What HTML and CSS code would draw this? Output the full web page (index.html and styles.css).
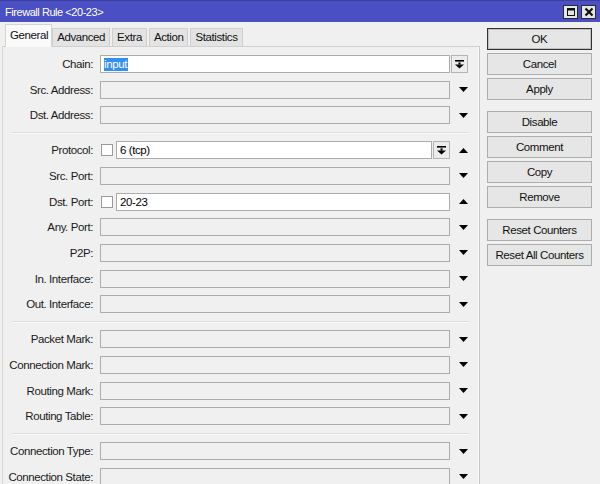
FILE: index.html
```html
<!DOCTYPE html>
<html>
<head>
<meta charset="utf-8">
<link rel="stylesheet" href="styles.css">
</head>
<body>
<div class="window">
  <div class="titlebar">
    <span class="title">Firewall Rule &lt;20-23&gt;</span>
    <div class="tb-btns">
      <span class="tb-btn"><svg width="10" height="10" viewBox="0 0 10 10"><path d="M1 1H9V9H1Z M2 3.5V8H8V3.5Z" fill="#111" fill-rule="evenodd"/></svg></span>
      <span class="tb-btn"><svg width="10" height="10" viewBox="0 0 10 10"><path d="M1.5 1.5L8.5 8.5M8.5 1.5L1.5 8.5" stroke="#111" stroke-width="2.2"/></svg></span>
    </div>
  </div>
  <div class="main">
    <div class="left">
      <div class="tabs">
        <span class="tab active">General</span>
        <span class="tab first">Advanced</span>
        <span class="tab">Extra</span>
        <span class="tab">Action</span>
        <span class="tab">Statistics</span>
      </div>
      <div class="panel">
        <div class="group">
          <label class="lbl">Chain:</label>
          <div class="ctl"><div class="field white"><span class="sel">input</span></div></div>
          <div class="arr start"><span class="dd-btn"><svg width="9" height="9" viewBox="0 0 9 9"><rect x="0" y="0" width="9" height="1.6"/><rect x="3.5" y="2.4" width="2" height="2.2"/><path d="M0 4.4H9L4.5 8.6Z"/></svg></span></div>

          <label class="lbl">Src. Address:</label>
          <div class="ctl"><div class="field"></div></div>
          <div class="arr"><svg class="tri" width="9" height="5" viewBox="0 0 9 5"><path d="M0 0H9L4.5 5Z"/></svg></div>

          <label class="lbl">Dst. Address:</label>
          <div class="ctl"><div class="field"></div></div>
          <div class="arr"><svg class="tri" width="9" height="5" viewBox="0 0 9 5"><path d="M0 0H9L4.5 5Z"/></svg></div>
        </div>
        <div class="sep"></div>
        <div class="group">
          <label class="lbl">Protocol:</label>
          <div class="ctl"><span class="chk"></span><div class="field white">6 (tcp)</div><span class="dd-btn inl"><svg width="9" height="9" viewBox="0 0 9 9"><rect x="0" y="0" width="9" height="1.6"/><rect x="3.5" y="2.4" width="2" height="2.2"/><path d="M0 4.4H9L4.5 8.6Z"/></svg></span></div>
          <div class="arr"><svg class="tri" width="9" height="5" viewBox="0 0 9 5"><path d="M0 5H9L4.5 0Z"/></svg></div>

          <label class="lbl">Src. Port:</label>
          <div class="ctl"><div class="field"></div></div>
          <div class="arr"><svg class="tri" width="9" height="5" viewBox="0 0 9 5"><path d="M0 0H9L4.5 5Z"/></svg></div>

          <label class="lbl">Dst. Port:</label>
          <div class="ctl"><span class="chk"></span><div class="field white">20-23</div></div>
          <div class="arr"><svg class="tri" width="9" height="5" viewBox="0 0 9 5"><path d="M0 5H9L4.5 0Z"/></svg></div>

          <label class="lbl">Any. Port:</label>
          <div class="ctl"><div class="field"></div></div>
          <div class="arr"><svg class="tri" width="9" height="5" viewBox="0 0 9 5"><path d="M0 0H9L4.5 5Z"/></svg></div>

          <label class="lbl">P2P:</label>
          <div class="ctl"><div class="field"></div></div>
          <div class="arr"><svg class="tri" width="9" height="5" viewBox="0 0 9 5"><path d="M0 0H9L4.5 5Z"/></svg></div>

          <label class="lbl">In. Interface:</label>
          <div class="ctl"><div class="field"></div></div>
          <div class="arr"><svg class="tri" width="9" height="5" viewBox="0 0 9 5"><path d="M0 0H9L4.5 5Z"/></svg></div>

          <label class="lbl">Out. Interface:</label>
          <div class="ctl"><div class="field"></div></div>
          <div class="arr"><svg class="tri" width="9" height="5" viewBox="0 0 9 5"><path d="M0 0H9L4.5 5Z"/></svg></div>
        </div>
        <div class="sep"></div>
        <div class="group">
          <label class="lbl">Packet Mark:</label>
          <div class="ctl"><div class="field"></div></div>
          <div class="arr"><svg class="tri" width="9" height="5" viewBox="0 0 9 5"><path d="M0 0H9L4.5 5Z"/></svg></div>

          <label class="lbl">Connection Mark:</label>
          <div class="ctl"><div class="field"></div></div>
          <div class="arr"><svg class="tri" width="9" height="5" viewBox="0 0 9 5"><path d="M0 0H9L4.5 5Z"/></svg></div>

          <label class="lbl">Routing Mark:</label>
          <div class="ctl"><div class="field"></div></div>
          <div class="arr"><svg class="tri" width="9" height="5" viewBox="0 0 9 5"><path d="M0 0H9L4.5 5Z"/></svg></div>

          <label class="lbl">Routing Table:</label>
          <div class="ctl"><div class="field"></div></div>
          <div class="arr"><svg class="tri" width="9" height="5" viewBox="0 0 9 5"><path d="M0 0H9L4.5 5Z"/></svg></div>
        </div>
        <div class="sep"></div>
        <div class="group">
          <label class="lbl">Connection Type:</label>
          <div class="ctl"><div class="field"></div></div>
          <div class="arr"><svg class="tri" width="9" height="5" viewBox="0 0 9 5"><path d="M0 0H9L4.5 5Z"/></svg></div>

          <label class="lbl">Connection State:</label>
          <div class="ctl"><div class="field"></div></div>
          <div class="arr"><svg class="tri" width="9" height="5" viewBox="0 0 9 5"><path d="M0 0H9L4.5 5Z"/></svg></div>
        </div>
      </div>
    </div>
    <div class="buttons">
      <div class="bgroup">
        <button class="btn default">OK</button>
        <button class="btn">Cancel</button>
        <button class="btn">Apply</button>
      </div>
      <div class="bgroup">
        <button class="btn">Disable</button>
        <button class="btn">Comment</button>
        <button class="btn">Copy</button>
        <button class="btn">Remove</button>
      </div>
      <div class="bgroup">
        <button class="btn">Reset Counters</button>
        <button class="btn">Reset All Counters</button>
      </div>
    </div>
  </div>
</div>
</body>
</html>
```
FILE: styles.css
```css
* { box-sizing: border-box; }
html, body { margin: 0; padding: 0; }
body {
  background: #f0f0f0;
  font-family: "Liberation Sans", Arial, sans-serif;
  font-size: 11.5px;
  letter-spacing: -0.4px;
  color: #000;
  width: 600px;
  height: 484px;
  overflow: hidden;
}
.window { width: 600px; height: 484px; display: flex; flex-direction: column; }
.titlebar {
  height: 22px;
  background: #4a50c4;
  border-top: 1px solid #3a3f9e;
  display: flex;
  align-items: center;
  justify-content: space-between;
  padding: 0 4px 0 5px;
  color: #fff;
  flex: none;
}
.title { font-size: 11px; letter-spacing: -0.45px; line-height: 14px; }
.tb-btns { display: flex; gap: 3px; margin-top: 1px; }
.tb-btn {
  width: 15px; height: 14px;
  background: #e6e6e6;
  border: 1px solid #2a2a2a;
  display: flex; align-items: center; justify-content: center;
}
.main { display: flex; flex: 1; min-height: 0; }
.left { width: 478px; margin-left: 2px; display: flex; flex-direction: column; flex: none; }
.tabs { height: 24px; display: flex; align-items: flex-end; padding-left: 3px; flex: none; position: relative; z-index: 1; }
.tab {
  height: 18px;
  background: #e3e3e3;
  border: 1px solid #cfcfcf;
  border-bottom: none;
  padding: 0 4px 0 4px;
  line-height: 17px;
  margin-left: 2px;
  color: #111;
}
.tab.first { margin-left: 0; }
.tab.active {
  height: 23px;
  background: #fafafa;
  border-color: #d4d4d4;
  margin-bottom: -1px;
  padding: 0 3px 0 4px;
  line-height: 21px;
  margin-left: 0;
}
.panel {
  flex: 1;
  border-top: 1px solid #d0d0d0;
  border-left: 1px solid #d6d6d6;
  border-right: 1px solid #c4c4c4;
  box-shadow: inset -1px 0 0 #fcfcfc;
  padding-top: 8px;
}
.group {
  display: grid;
  grid-template-columns: 90px 350px 20px;
  column-gap: 7px;
  row-gap: 7.67px;
  grid-auto-rows: 18px;
}
.group .arr { margin-left: -7px; }
.lbl { text-align: right; line-height: 18px; color: #1a1a1a; white-space: nowrap; }
.ctl { display: flex; align-items: center; gap: 3px; }
.field {
  flex: 1;
  height: 18px;
  border: 1px solid #acacac;
  background: #f0f0f0;
  padding-left: 3px;
  line-height: 16px;
  white-space: nowrap;
}
.field.white { background: #fff; }
.sel { background: #3390ee; color: #fff; display: inline-block; line-height: 13px; padding: 0 1px 0 0; }
.chk { width: 12px; height: 12px; border: 1px solid #9a9a9a; background: #fff; margin-left: 1px; flex: none; }
.arr { display: flex; align-items: center; justify-content: center; }
.arr.start { justify-content: flex-start; padding-left: 1px; }
.dd-btn {
  width: 17px; height: 18px;
  border: 1px solid #b4b4b4;
  background: #ececec;
  display: flex; align-items: center; justify-content: center;
  flex: none;
}
.dd-btn.inl { margin-left: -2px; }
.tri { display: block; }
.sep { height: 1px; background: #dcdcdc; border-bottom: 1px solid #fafafa; box-sizing: content-box; margin: 8px 10px 7px 9px; }
.buttons { margin-left: 7px; padding-top: 6px; width: 105px; display: flex; flex-direction: column; gap: 11px; }
.bgroup { display: flex; flex-direction: column; gap: 3px; }
.btn {
  width: 105px; height: 22px;
  background: #e6e6e6;
  border: 1px solid #adadad;
  font-family: inherit;
  font-size: 11.5px;
  letter-spacing: -0.4px;
  color: #111;
  padding: 0;
}
.btn.default { border: 1px solid #333; box-shadow: inset 0 0 0 1px #c0c0c0; }
```
